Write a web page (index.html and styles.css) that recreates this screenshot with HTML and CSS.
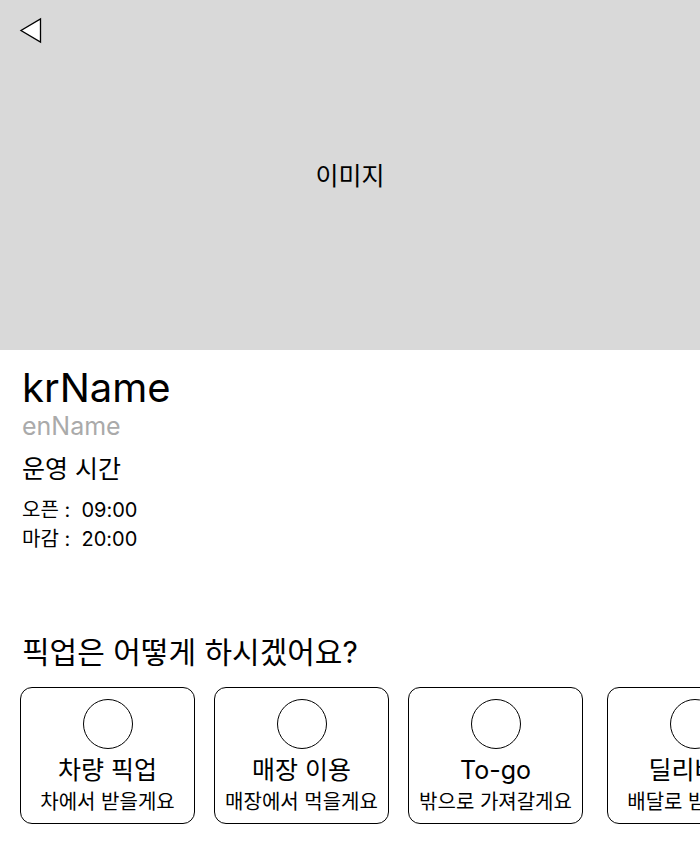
FILE: index.html
```html
<!DOCTYPE html>
<html lang="ko">
<head>
<meta charset="utf-8">
<link rel="stylesheet" href="styles.css">
</head>
<body>
<div class="hero">
  <button class="back" aria-label="back">
    <svg width="24" height="28" viewBox="0 0 24 28"><polygon points="22.5,2 22.5,25 3,13.5" fill="#fff" stroke="#000" stroke-width="1.3" stroke-linejoin="miter"/></svg>
  </button>
  <span class="hero-label">이미지</span>
</div>
<div class="info">
  <h1 class="kr">krName</h1>
  <p class="en">enName</p>
  <h2 class="hours-title">운영 시간</h2>
  <p class="hours">오픈 :&nbsp; 09:00</p>
  <p class="hours">마감 :&nbsp; 20:00</p>
</div>
<div class="pickup">
  <h2 class="pickup-title">픽업은 어떻게 하시겠어요?</h2>
  <div class="cards">
    <div class="card"><div class="circle"></div><div class="c-title">차량 픽업</div><div class="c-sub">차에서 받을게요</div></div>
    <div class="card"><div class="circle"></div><div class="c-title">매장 이용</div><div class="c-sub">매장에서 먹을게요</div></div>
    <div class="card"><div class="circle"></div><div class="c-title">To-go</div><div class="c-sub">밖으로 가져갈게요</div></div>
    <div class="card"><div class="circle"></div><div class="c-title">딜리버리</div><div class="c-sub">배달로 받을게요</div></div>
  </div>
</div>
</body>
</html>
```
FILE: styles.css
```css
html, body { margin: 0; padding: 0; }
body {
  width: 700px;
  overflow: hidden;
  font-family: Inter, "Noto Sans CJK KR", sans-serif;
  color: #000;
  background: #fff;
}
.hero {
  height: 350px;
  background: #d9d9d9;
  position: relative;
  display: flex;
  align-items: center;
  justify-content: center;
}
.hero-label { font-size: 25px; margin-top: -2px; }
.back {
  position: absolute;
  left: 18px;
  top: 17px;
  padding: 0;
  border: 0;
  background: none;
  line-height: 0;
}
.info { padding: 15px 22px 0; }
.kr { margin: 0; font-size: 40px; font-weight: 400; line-height: 46px; }
.en { margin: 0; font-size: 25px; color: #aaaaaa; line-height: 30px; }
.hours-title { margin: 12px 0 11px; font-size: 25px; font-weight: 400; line-height: 32px; }
.hours { margin: 0; font-size: 20px; line-height: 29px; }
.pickup { padding: 79px 0 0 20px; }
.pickup-title { margin: 0 0 16px 2px; font-size: 30px; font-weight: 400; line-height: 38px; }
.cards { display: flex; gap: 19px; }
.card {
  flex: 0 0 auto;
  width: 173px;
  height: 135px;
  border: 1px solid #000;
  border-radius: 12px;
  display: flex;
  flex-direction: column;
  align-items: center;
}
.card:nth-child(4) { margin-left: 5px; }
.circle {
  width: 48px; height: 48px;
  border: 1px solid #000;
  border-radius: 50%;
  margin-top: 11px;
  flex: 0 0 auto;
}
.c-title { font-size: 25px; line-height: 30px; margin-top: 6px; white-space: nowrap; }
.c-sub { font-size: 20px; line-height: 26px; margin-top: 4px; white-space: nowrap; }
```
